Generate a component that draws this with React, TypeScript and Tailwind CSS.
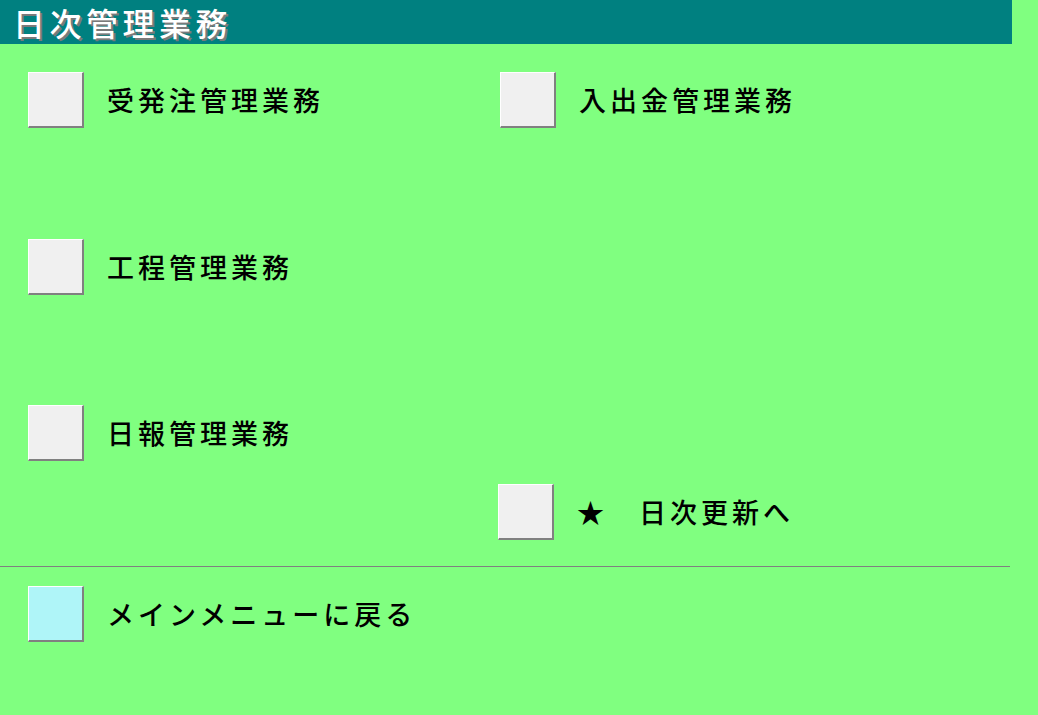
const font = "font-['Noto_Sans_CJK_JP',sans-serif]";

function MenuButton({ label, cyan = false }: { label: string; cyan?: boolean }) {
  return (
    <div className="flex items-center">
      <button
        className={`w-[56px] h-[56px] border-t border-l border-white border-b-2 border-r-2 border-b-[#808080] border-r-[#808080] ${
          cyan ? 'bg-[#aff5f8]' : 'bg-[#f0f0f0]'
        }`}
      />
      <span className={`ml-[23px] -mt-[2px] text-[27px] leading-none tracking-[4px] font-medium text-black ${font}`}>
        {label}
      </span>
    </div>
  );
}

export default function App() {
  return (
    <div className={`w-[1038px] h-[715px] bg-[#80ff80] overflow-hidden ${font}`}>
      <div className="w-[1012px] h-[44px] bg-[#008080] flex items-center pl-[13px]">
        <h1 className="text-[32px] leading-none tracking-[4.5px] font-medium text-white [text-shadow:2px_2px_0_#7a7a7a]">
          日次管理業務
        </h1>
      </div>

      <div className="pl-[28px] pt-[28px]">
        <div className="grid grid-cols-[472px_1fr]">
          <MenuButton label="受発注管理業務" />
          <MenuButton label="入出金管理業務" />
        </div>
        <div className="mt-[111px]">
          <MenuButton label="工程管理業務" />
        </div>
        <div className="mt-[110px]">
          <MenuButton label="日報管理業務" />
        </div>
        <div className="mt-[23px] pl-[470px]">
          <MenuButton label="★　日次更新へ" />
        </div>
      </div>

      <div className="mt-[26px] w-[1010px] h-px bg-[#808080]" />

      <div className="pl-[28px] mt-[19px]">
        <MenuButton label="メインメニューに戻る" cyan />
      </div>
    </div>
  );
}
